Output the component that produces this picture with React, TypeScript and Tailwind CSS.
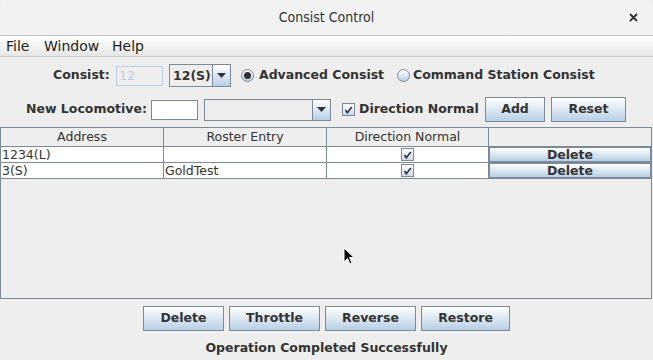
import React from "react";

const metalBtn =
  "border border-[#7a8a99] bg-gradient-to-b from-[#ffffff] to-[#b8cfe5] text-[#333333] font-bold flex items-center justify-center";

const ArrowBtn = () => (
  <div className="w-[18px] h-full border-l border-[#7a8a99] bg-gradient-to-b from-[#ffffff] to-[#b8cfe5] flex items-center justify-center">
    <svg width="9" height="5" viewBox="0 0 9 5">
      <path d="M0 0 H9 L4.5 5 Z" fill="#333333" />
    </svg>
  </div>
);

const CheckBox = () => (
  <div className="w-[13px] h-[13px] border border-[#7a8a99] bg-gradient-to-b from-[#ffffff] to-[#c8daec] flex items-center justify-center">
    <svg width="9" height="9" viewBox="0 0 9 9">
      <path d="M1.5 5 L3.3 7.8 L7.8 2" stroke="#333333" strokeWidth="1.6" fill="none" />
    </svg>
  </div>
);

const Radio = ({ on }: { on?: boolean }) => (
  <div className="w-[13px] h-[13px] rounded-full border border-[#7a8a99] bg-gradient-to-b from-[#ffffff] to-[#b8cfe5] flex items-center justify-center">
    {on && <div className="w-[7px] h-[7px] rounded-full bg-[#333333]" />}
  </div>
);

const rows = [
  { addr: "1234(L)", roster: "" },
  { addr: "3(S)", roster: "GoldTest" },
];

export default function App() {
  return (
    <div
      className="relative w-[653px] h-[360px] bg-[#eeeeee] flex flex-col text-[#333333] overflow-hidden"
      style={{ fontFamily: '"DejaVu Sans", sans-serif' }}
    >
      {/* Title bar */}
      <div className="h-[36px] shrink-0 bg-[#f2f2f2] border-b border-[#c4c4c4] rounded-t-[6px] flex items-center relative">
        <div
          className="w-full text-center text-[14px] text-[#2e3436]"
          style={{ fontFamily: '"DejaVu Sans Condensed", "Roboto", sans-serif' }}
        >
          Consist Control
        </div>
        <svg className="absolute left-[629px] top-[13px]" width="9" height="9" viewBox="0 0 9 9">
          <path d="M1 1 L8 8 M8 1 L1 8" stroke="#2e3436" strokeWidth="1.8" />
        </svg>
      </div>

      {/* Menu bar */}
      <div className="h-[21px] shrink-0 bg-gradient-to-b from-[#ffffff] to-[#e6e6e6] border-b border-[#c8c8c8] flex items-center text-[14px] text-[#222222]">
        <span className="ml-[6px] w-[24px]">File</span>
        <span className="ml-[14px] w-[56px]">Window</span>
        <span className="ml-[12px]">Help</span>
      </div>

      {/* Consist row */}
      <div className="h-[23px] mt-[7px] flex items-center text-[12.5px] font-bold whitespace-nowrap">
        <span className="ml-[53px] w-[56px]">Consist:</span>
        <div className="ml-[7px] w-[47px] h-[20px] border border-[#b8cfe5] bg-[#eeeeee] text-[#b8cfe5] font-normal pl-[2px] leading-[18px]">
          12
        </div>
        <div className="ml-[6px] w-[62px] h-[23px] border border-[#7a8a99] bg-[#eeeeee] flex items-stretch">
          <span className="flex-1 pl-[3px] leading-[21px]">12(S)</span>
          <ArrowBtn />
        </div>
        <div className="ml-[10px]">
          <Radio on />
        </div>
        <span className="ml-[5px] w-[124px]">Advanced Consist</span>
        <div className="ml-[14px]">
          <Radio />
        </div>
        <span className="ml-[3px]">Command Station Consist</span>
      </div>

      {/* New locomotive row */}
      <div className="h-[25px] mt-[10px] flex items-center text-[12.5px] font-bold whitespace-nowrap">
        <span className="ml-[26px] w-[119px]">New Locomotive:</span>
        <div className="ml-[6px] w-[47px] h-[20px] border border-[#7a8a99] bg-white" />
        <div className="ml-[6px] w-[127px] h-[22px] border border-[#7a8a99] bg-[#eeeeee] flex items-stretch">
          <span className="flex-1" />
          <ArrowBtn />
        </div>
        <div className="ml-[11px]">
          <CheckBox />
        </div>
        <span className="ml-[4px] w-[117px]">Direction Normal</span>
        <div className={`${metalBtn} ml-[9px] w-[60px] h-[25px]`}>Add</div>
        <div className={`${metalBtn} ml-[6px] w-[75px] h-[25px]`}>Reset</div>
      </div>

      {/* Table */}
      <div className="mt-[5px] w-[652px] h-[172px] border border-[#7a8a99] bg-[#eeeeee] flex flex-col text-[12.5px]">
        <div className="h-[19px] flex border-b border-[#7a8a99] bg-[#eeeeee]">
          <div className="w-[163px] border-r border-[#7a8a99] text-center leading-[18px]">Address</div>
          <div className="w-[163px] border-r border-[#7a8a99] text-center leading-[18px]">Roster Entry</div>
          <div className="w-[162px] border-r border-[#7a8a99] text-center leading-[18px]">Direction Normal</div>
          <div className="flex-1" />
        </div>
        {rows.map((r) => (
          <div key={r.addr} className="h-[16px] flex border-b border-[#7a8a99] bg-white">
            <div className="w-[163px] border-r border-[#7a8a99] leading-[15px] pl-[1px]">{r.addr}</div>
            <div className="w-[163px] border-r border-[#7a8a99] leading-[15px] pl-[1px]">{r.roster}</div>
            <div className="w-[162px] border-r border-[#7a8a99] flex items-center justify-center">
              <CheckBox />
            </div>
            <div className={`${metalBtn} flex-1 leading-[14px]`}>Delete</div>
          </div>
        ))}
      </div>

      {/* Bottom buttons */}
      <div className="mt-[7px] flex justify-center gap-[5px] text-[12.5px]">
        <div className={`${metalBtn} w-[81px] h-[25px]`}>Delete</div>
        <div className={`${metalBtn} w-[91px] h-[25px]`}>Throttle</div>
        <div className={`${metalBtn} w-[91px] h-[25px]`}>Reverse</div>
        <div className={`${metalBtn} w-[89px] h-[25px]`}>Restore</div>
      </div>

      <div className="mt-[8px] text-center text-[12.5px] font-bold">Operation Completed Successfully</div>

      {/* Mouse pointer */}
      <svg className="absolute left-[343px] top-[247px]" width="14" height="20" viewBox="0 0 14 20">
        <path d="M1 1 L1 15 L4.5 11.5 L7 17 L9 16 L6.5 10.5 L11 10.5 Z" fill="#000000" stroke="#ffffff" strokeWidth="1" />
      </svg>
    </div>
  );
}
